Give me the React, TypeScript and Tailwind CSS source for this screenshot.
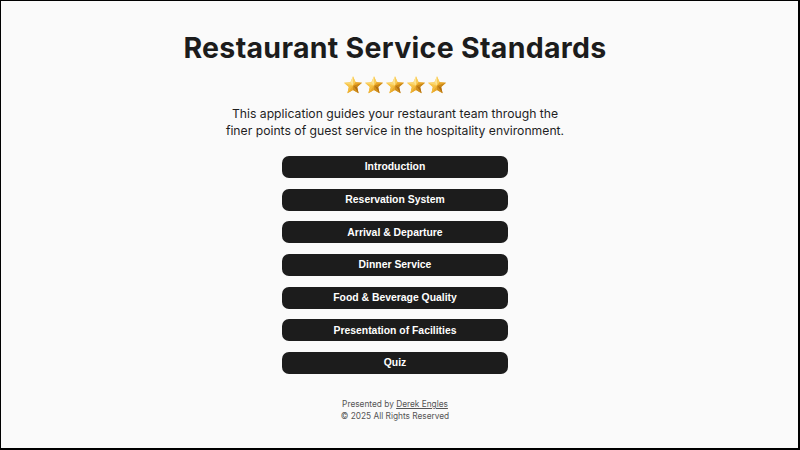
import React from "react";

const Star = ({ id }: { id: number }) => (
  <svg width="20" height="20" viewBox="0 0 24 24">
    <defs>
      <linearGradient id={`g${id}`} x1="0" y1="0" x2="1" y2="1">
        <stop offset="0" stopColor="#fde08a" />
        <stop offset="0.5" stopColor="#f2b632" />
        <stop offset="1" stopColor="#c27a12" />
      </linearGradient>
    </defs>
    <polygon
      points="12,1.5 15.1,8.6 22.8,9.3 17,14.4 18.7,22 12,18 5.3,22 7,14.4 1.2,9.3 8.9,8.6"
      fill={`url(#g${id})`}
    />
    <polygon points="12,1.5 15.1,8.6 12,13" fill="#f9cd5a" />
    <polygon points="15.1,8.6 22.8,9.3 12,13" fill="#e9a628" />
    <polygon points="22.8,9.3 17,14.4 12,13" fill="#c98818" />
    <polygon points="17,14.4 18.7,22 12,13" fill="#b36f10" />
    <polygon points="18.7,22 12,18 12,13" fill="#d08f1c" />
    <polygon points="12,18 5.3,22 12,13" fill="#e8a82c" />
    <polygon points="5.3,22 7,14.4 12,13" fill="#f2bb3e" />
    <polygon points="7,14.4 1.2,9.3 12,13" fill="#f7c54b" />
    <polygon points="1.2,9.3 8.9,8.6 12,13" fill="#fbd76e" />
    <polygon points="8.9,8.6 12,1.5 12,13" fill="#fde391" />
  </svg>
);

const items = [
  "Introduction",
  "Reservation System",
  "Arrival & Departure",
  "Dinner Service",
  "Food & Beverage Quality",
  "Presentation of Facilities",
  "Quiz",
];

export default function App() {
  return (
    <div className="w-[800px] h-[450px] bg-[#fafafa] border-t border-l border-r-2 border-b-2 border-black flex flex-col items-center overflow-hidden box-border pr-[9px]">
      <h1
        className="mt-[27px] text-[28.5px] leading-[40px] font-bold text-[#1c1c1c] tracking-[0.3px]"
        style={{ fontFamily: "Inter, 'Noto Sans', sans-serif" }}
      >
        Restaurant Service Standards
      </h1>
      <div className="flex gap-[1px] mt-[7px]">
        {[0, 1, 2, 3, 4].map((i) => (
          <Star key={i} id={i} />
        ))}
      </div>
      <p
        className="mt-[10px] text-[12.2px] leading-[17px] text-center text-[#1f1f1f]"
        style={{ fontFamily: "Inter, 'Noto Sans', sans-serif" }}
      >
        This application guides your restaurant team through the
        <br />
        finer points of guest service in the hospitality environment.
      </p>
      <div className="mt-[17px] flex flex-col gap-[10.7px]">
        {items.map((t) => (
          <button
            key={t}
            className="w-[226px] h-[22px] rounded-[7px] bg-[#1c1c1c] text-white text-[10.4px] font-bold flex items-center justify-center"
            style={{ fontFamily: "'Liberation Sans', Arial, sans-serif" }}
          >
            {t}
          </button>
        ))}
      </div>
      <div
        className="mt-[25px] text-[8.3px] leading-[11.5px] text-[#555] text-center"
        style={{ fontFamily: "Inter, 'Noto Sans', sans-serif" }}
      >
        <div>
          Presented by <span className="underline">Derek Engles</span>
        </div>
        <div>© 2025 All Rights Reserved</div>
      </div>
    </div>
  );
}
